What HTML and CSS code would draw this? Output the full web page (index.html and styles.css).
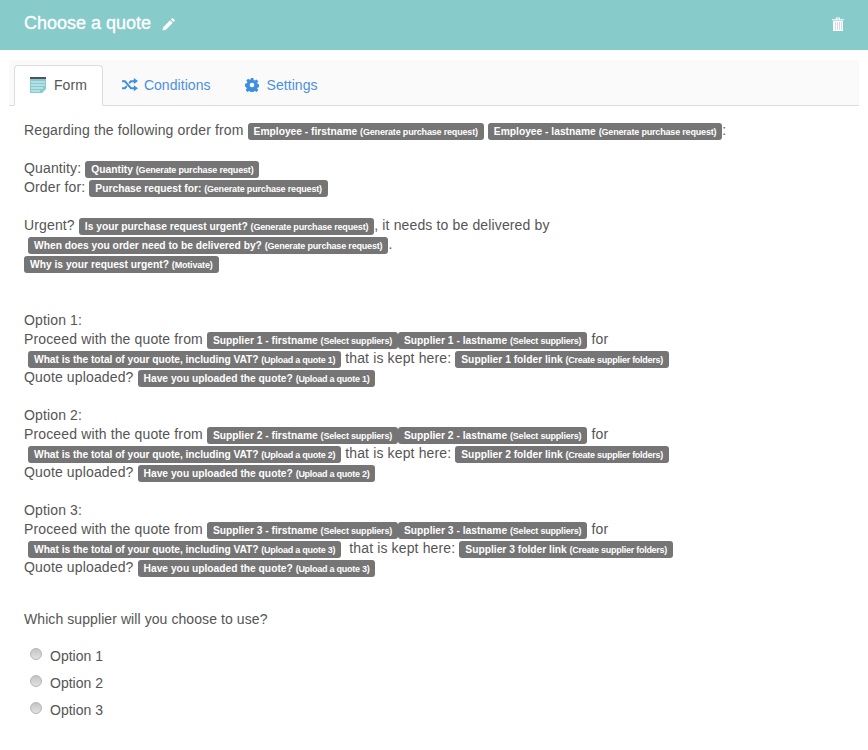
FILE: index.html
```html
<!DOCTYPE html>
<html lang="en">
<head>
<meta charset="utf-8">
<title>Choose a quote</title>
<link rel="stylesheet" href="styles.css">
</head>
<body>
<header class="topbar">
  <h1 class="title">Choose a quote
    <svg class="pencil" viewBox="0 0 14 14" width="13" height="13"><path d="M0.5 13.5l0.8-3.6 7.4-7.4 2.8 2.8-7.4 7.4zM9.6 1.6l1-1a1 1 0 0 1 1.4 0l1.4 1.4a1 1 0 0 1 0 1.4l-1 1z" fill="#fff"/></svg>
  </h1>
  <svg class="trash" viewBox="0 0 12 14" width="12" height="14"><path d="M0 2.2h12v1H0zM4 2.2V.6h4v1.6h-1V1.5H5v.7z" fill="#fff"/><path d="M1 3.8h10V14H1z" fill="#fff"/><path d="M3 5h.8v7.8H3zM5 5h.8v7.8H5zM7 5h.8v7.8H7zM9 5h.7v7.8H9z" fill="#c9cdf0"/></svg>
</header>
<main class="panel">
  <nav class="tabs">
    <a class="tab active">
      <svg class="tab-icon" viewBox="0 0 16 16" width="16" height="16"><path d="M0 0h16v2H0z" fill="#4a5560"/><path d="M0 2h16v10l-4 4H0z" fill="#86cbd0"/><path d="M1 4.5h14v1H1zM1 7.5h14v1H1zM1 10.5h12v1H1zM1 13.5h9v1H1z" fill="#e4f4f5"/></svg>
      Form</a>
    <a class="tab tab-tight">
      <svg class="tab-icon" viewBox="0 0 16 13" width="16" height="13"><path d="M0 2.2h3.4l6 7h2.4V7.2L16 10.2l-4.200 3v-2H8.500l-6-7H0zM0 9.200h2.500l1.700-2 1.300 1.500-2.200 2.500H0zM8.500 2.200h3.300V0L16 3l-4.200 3V4.200H9.400l-1.600 1.900-1.300-1.500z" fill="#3d8fe0"/></svg>
      Conditions</a>
    <a class="tab">
      <svg class="tab-icon" viewBox="0 0 14 14" width="14" height="14"><path fill-rule="evenodd" d="M5.700 0h2.600l.4 1.900 1.200.5 1.600-1 1.800 1.800-1.100 1.600.5 1.200 1.900.4v2.600l-1.900.4-.5 1.200 1.100 1.600-1.800 1.800-1.600-1.100-1.200.5-.4 1.900H5.700l-.4-1.900-1.200-.5-1.600 1.100-1.800-1.800 1.100-1.600-.5-1.200L0 8.300V5.700l1.900-.4.5-1.200-1.100-1.600 1.800-1.800 1.600 1 1.200-.5zM7 4.700a2.300 2.300 0 1 0 0 4.600 2.300 2.300 0 0 0 0-4.600z" fill="#3d8fe0"/></svg>
      Settings</a>
  </nav>
  <section class="body">
    <p class="line">Regarding the following order from <span class="tag"><b>Employee - firstname</b> <small class="gen">(Generate purchase request)</small></span> <span class="tag"><b>Employee - lastname</b> <small class="gen">(Generate purchase request)</small></span>:</p>
    <p class="line gap">Quantity: <span class="tag"><b>Quantity</b> <small class="gen">(Generate purchase request)</small></span></p>
    <p class="line">Order for: <span class="tag"><b>Purchase request for:</b> <small class="gen">(Generate purchase request)</small></span></p>
    <p class="line gap">Urgent? <span class="tag"><b>Is your purchase request urgent?</b> <small class="gen">(Generate purchase request)</small></span>, it needs to be delivered by</p>
    <p class="line">&nbsp;<span class="tag"><b>When does you order need to be delivered by?</b> <small class="gen">(Generate purchase request)</small></span>.</p>
    <p class="line"><span class="tag"><b>Why is your request urgent?</b> <small class="gen">(Motivate)</small></span></p>

    <p class="line gap-lg">Option 1:</p>
    <p class="line">Proceed with the quote from <span class="tag"><b>Supplier 1 - firstname</b> <small class="sel">(Select suppliers)</small></span><span class="tag"><b>Supplier 1 - lastname</b> <small class="sel">(Select suppliers)</small></span> for</p>
    <p class="line">&nbsp;<span class="tag"><b class="vat">What is the total of your quote, including VAT?</b> <small class="up">(Upload a quote 1)</small></span> that is kept here: <span class="tag"><b>Supplier 1 folder link</b> <small class="up">(Create supplier folders)</small></span></p>
    <p class="line">Quote uploaded? <span class="tag"><b>Have you uploaded the quote?</b> <small class="up">(Upload a quote 1)</small></span></p>

    <p class="line gap">Option 2:</p>
    <p class="line">Proceed with the quote from <span class="tag"><b>Supplier 2 - firstname</b> <small class="sel">(Select suppliers)</small></span><span class="tag"><b>Supplier 2 - lastname</b> <small class="sel">(Select suppliers)</small></span> for</p>
    <p class="line">&nbsp;<span class="tag"><b class="vat">What is the total of your quote, including VAT?</b> <small class="up">(Upload a quote 2)</small></span> that is kept here: <span class="tag"><b>Supplier 2 folder link</b> <small class="up">(Create supplier folders)</small></span></p>
    <p class="line">Quote uploaded? <span class="tag"><b>Have you uploaded the quote?</b> <small class="up">(Upload a quote 2)</small></span></p>

    <p class="line gap">Option 3:</p>
    <p class="line">Proceed with the quote from <span class="tag"><b>Supplier 3 - firstname</b> <small class="sel">(Select suppliers)</small></span><span class="tag"><b>Supplier 3 - lastname</b> <small class="sel">(Select suppliers)</small></span> for</p>
    <p class="line">&nbsp;<span class="tag"><b class="vat">What is the total of your quote, including VAT?</b> <small class="up">(Upload a quote 3)</small></span>&nbsp; that is kept here: <span class="tag"><b>Supplier 3 folder link</b> <small class="up">(Create supplier folders)</small></span></p>
    <p class="line">Quote uploaded? <span class="tag"><b>Have you uploaded the quote?</b> <small class="up">(Upload a quote 3)</small></span></p>

    <p class="question">Which supplier will you choose to use?</p>
    <div class="choices">
      <label class="choice"><span class="radio"></span>Option 1</label>
      <label class="choice"><span class="radio"></span>Option 2</label>
      <label class="choice"><span class="radio"></span>Option 3</label>
    </div>
  </section>
</main>
</body>
</html>
```
FILE: styles.css
```css
* { box-sizing: border-box; }
html, body { margin: 0; padding: 0; }
body {
  width: 868px;
  height: 750px;
  overflow: hidden;
  background: #fff;
  color: #555;
  font-family: "Liberation Sans", Arial, sans-serif;
  font-size: 14px;
}
.topbar {
  height: 50px;
  background: #87cbca;
  display: flex;
  align-items: center;
  justify-content: space-between;
  padding: 0 24px 3px;
  color: #fff;
}
.title {
  margin: 0;
  font-size: 18px;
  font-weight: 400;
  -webkit-text-stroke: 0.3px #fff;
  display: flex;
  align-items: center;
  gap: 11px;
}
.pencil { margin-top: 1px; }
.panel { padding: 10px 9px 0 9px; }
.tabs {
  height: 46px;
  background: #fafafa;
  border-bottom: 1px solid #ddd;
  padding: 5px 0 0 5px;
  display: flex;
}
.tab {
  height: 41px;
  display: flex;
  align-items: center;
  gap: 8px;
  color: #4a90e2;
  padding: 0 15px 2px;
  border: 1px solid transparent;
  border-radius: 4px 4px 0 0;
  margin-right: 2px;
  letter-spacing: 0.05px;
}
.tab-tight { gap: 6px; padding-left: 16px; }
.tab.active {
  background: #fff;
  color: #555;
  border-color: #ddd;
  border-bottom-color: #fff;
}
.body { padding: 15px 0 0 15px; }
.line { margin: 0; line-height: 19px; height: 19px; white-space: nowrap; letter-spacing: 0.14px; }
.gap { margin-top: 19px; }
.gap-lg { margin-top: 38px; }
.tag {
  display: inline-block;
  height: 17px;
  line-height: 17px;
  padding: 0 6px;
  background: #757575;
  color: #fff;
  border-radius: 3px;
  vertical-align: baseline;
  font-size: 10.25px;
  letter-spacing: 0;
}
.tag b { font-weight: 700; }
.tag b.vat { letter-spacing: -0.05px; }
.tag small { font-size: 9px; font-weight: 700; }
.tag small.gen { letter-spacing: -0.18px; }
.tag small.sel { letter-spacing: -0.2px; }
.tag small.up { letter-spacing: -0.26px; }
.question { margin: 32px 0 0; line-height: 20px; letter-spacing: 0.08px; }
.choices { margin-top: 17px; padding-left: 6px; display: flex; flex-direction: column; gap: 7px; }
.choice { display: flex; align-items: center; height: 20px; gap: 8px; }
.radio {
  width: 12px;
  height: 12px;
  border-radius: 50%;
  background: linear-gradient(#c4c4c4, #e2e2e2);
  border: 1px solid #b5b5b5;
  margin-top: -4px;
}
```
